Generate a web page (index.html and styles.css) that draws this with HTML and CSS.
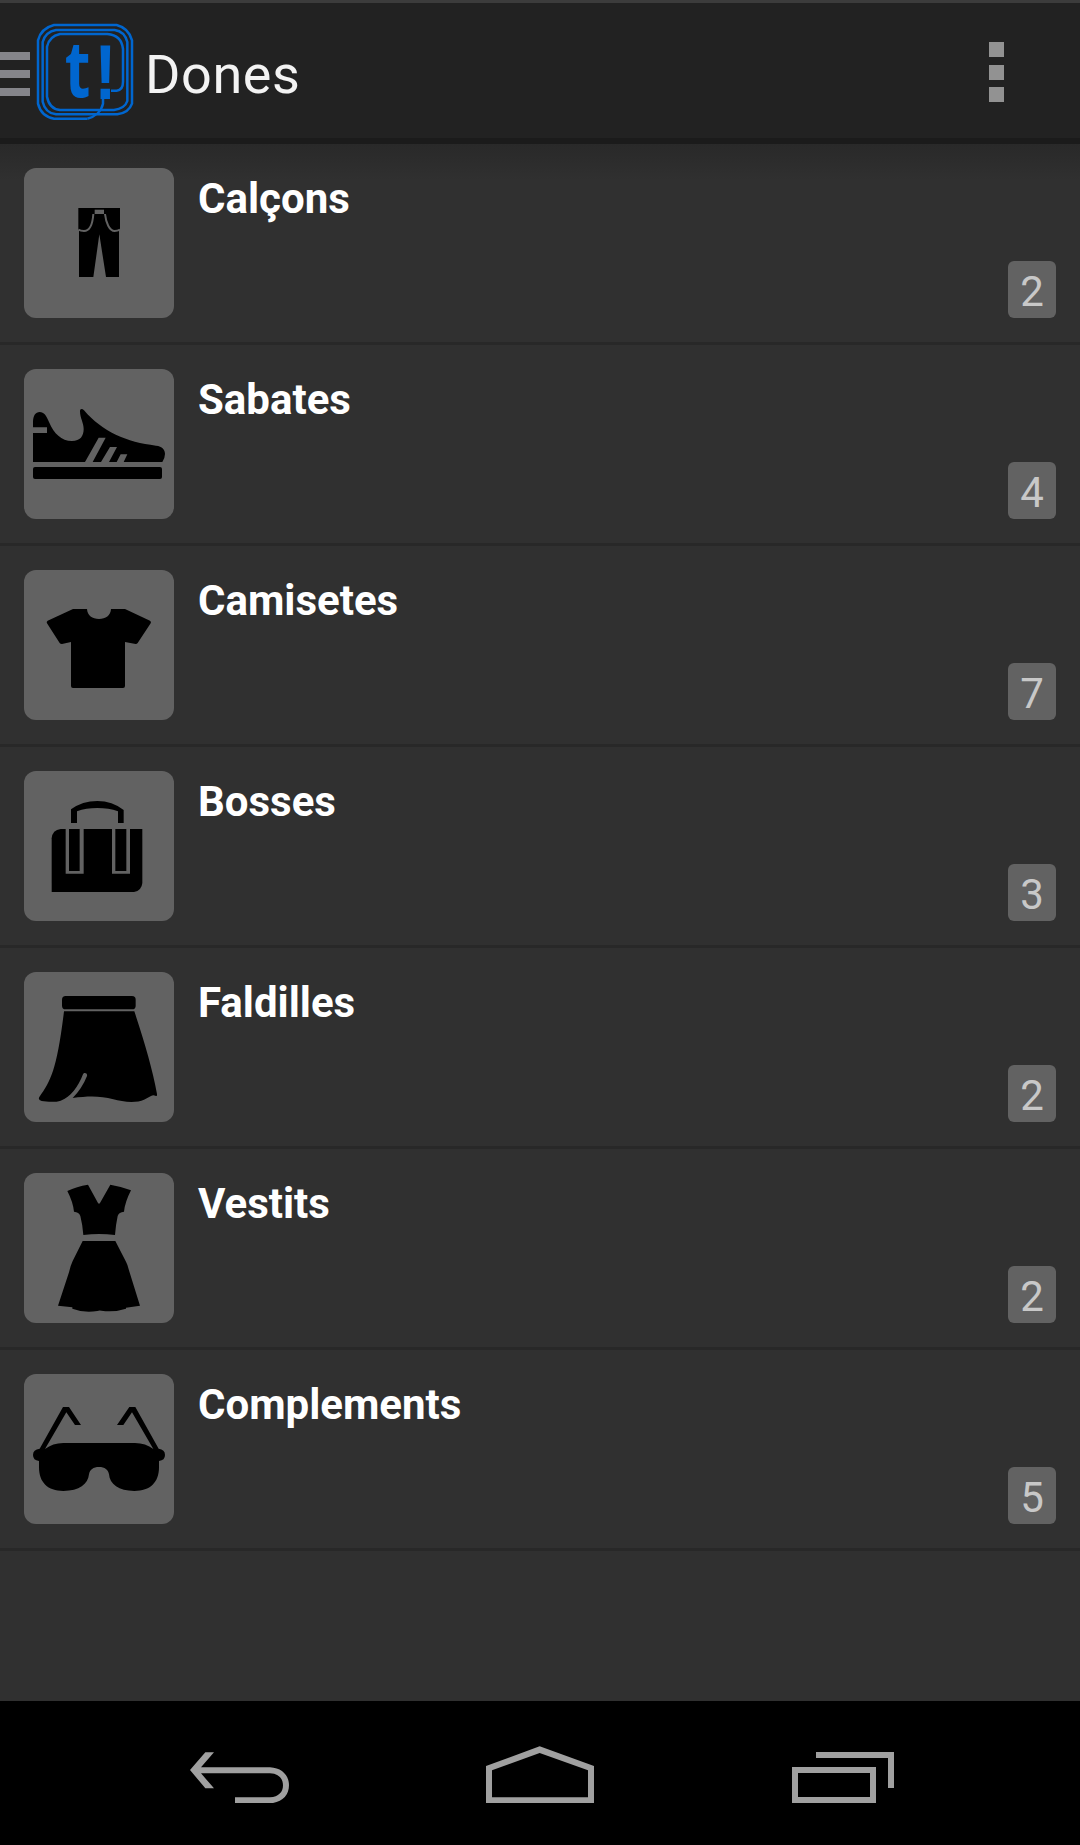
FILE: index.html
```html
<!DOCTYPE html>
<html lang="ca">
<head>
<meta charset="utf-8">
<title>Dones</title>
<link rel="stylesheet" href="styles.css">
</head>
<body>
<div class="screen">
  <header class="action-bar">
    <div class="drawer-toggle"><i></i><i></i><i></i></div>
    <svg class="logo" viewBox="111 72 288 288" aria-hidden="true">
      <g class="logo-lines">
        <path d="M262 356H162C134 351 120 335 114 311V121C120 98 134 82 162 75H350C377 82 390 98 396 121V311C390 328 377 340 352 343H168C145 340 133 327 128 305V126C133 108 145 94 168 90H344C366 93 377 107 382 126V303C377 319 362 327 342 330H180C155 327 145 312 141 290V140C145 120 158 107 180 102H322C350 104 366 120 369 147V245C369 262 362 271 350 272H333"/>
        <path d="M309 297V311C304 333 286 350 262 356"/>
      </g>
      <text class="logo-t" x="194" y="290" textLength="77" lengthAdjust="spacingAndGlyphs">t</text>
      <text class="logo-mark" x="283" y="297" textLength="67" lengthAdjust="spacingAndGlyphs">!</text>
    </svg>
    <h1 class="title">Dones</h1>
    <div class="overflow"><i></i><i></i><i></i></div>
  </header>

  <ul class="list">
    <li class="row">
      <div class="thumb"><svg viewBox="72 54 450 450">
        <path d="M235 174H360V240H357V381H318L298 253L280 381H237V240H235Z"/>
        <path class="cut" d="M284 179H312V192H284Z"/>
        <path class="seam" d="M280 192C278 220 270 243 252 243Q242 243 235 239M315 192C318 218 328 243 344 243Q352 243 360 239"/>
      </svg></div>
      <h2 class="name">Calçons</h2><span class="count">2</span>
    </li>
    <li class="row">
      <div class="thumb"><svg viewBox="72 57 450 450">
        <path d="M99 336V249H141V232H99V216C99 197 107 186 119 186C132 186 139 197 147 216C162 251 184 273 216 273C241 273 251 258 251 237C251 218 240 205 240 184C240 176 246 175 252 181C307 245 380 277 468 287C487 289 495 299 495 312Q495 323 487 336H371L382 313H362L350 336H327L351 291H330L303 336H278L317 263H296L255 336Z"/>
        <rect x="99" y="351" width="387" height="36" rx="6"/>
      </svg></div>
      <h2 class="name">Sabates</h2><span class="count">4</span>
    </li>
    <li class="row">
      <div class="thumb"><svg viewBox="72 60 450 450">
        <path d="M219 177H261C262 197 277 207 297 207C317 207 332 197 333 177H375L450 212Q455 215 452 220L413 279Q411 282 407 282L375 276V408Q375 414 369 414H219Q213 414 213 408V276L186 282Q181 282 179 279L141 220Q138 215 143 212Z"/>
      </svg></div>
      <h2 class="name">Camisetes</h2><span class="count">7</span>
    </li>
    <li class="row">
      <div class="thumb"><svg viewBox="72 63 450 450">
        <path d="M213 219V178Q247 153 292 153Q337 153 371 180V219H354V184Q326 174 292 174Q258 174 231 184V219Z"/>
        <path d="M182 237H427V399Q425 422 402 426H155V265Q157 240 182 237Z"/>
        <path class="cut" fill-rule="evenodd" d="M197 236H251V371H197ZM207 236V363H239V236ZM336 236H390V371H336ZM346 236V363H379V236Z"/>
      </svg></div>
      <h2 class="name">Bosses</h2><span class="count">3</span>
    </li>
    <li class="row">
      <div class="thumb"><svg viewBox="72 66 450 450">
        <rect x="186" y="138" width="221" height="40" rx="11"/>
        <path d="M192 184H403C433 276 457 355 471 432Q472 441 466 437Q460 434 453 438L432 449C410 460 367 456 340 448C300 437 265 438 218 444Q247 414 261 378C263 369 252 366 249 373C235 410 212 442 182 452C168 457 142 456 125 453Q113 450 118 441C153 393 171 356 192 184Z"/>
      </svg></div>
      <h2 class="name">Faldilles</h2><span class="count">2</span>
    </li>
    <li class="row">
      <div class="thumb"><svg viewBox="72 69 450 450">
        <path d="M202 123Q230 109 264 104L294 159Q297 164 300 159L331 104Q362 109 393 121Q375 156 372 185Q357 186 353 198Q347 226 345 255Q297 249 250 255Q248 225 241 198Q237 186 222 185Q219 156 202 123Z"/>
        <path d="M248 273H346L378 335Q383 344 386 358L420 467L378 473V476Q341 488 304 482Q298 480 292 483Q250 489 217 476V472L174 467L207 367Q211 348 218 333Z"/>
      </svg></div>
      <h2 class="name">Vestits</h2><span class="count">2</span>
    </li>
    <li class="row">
      <div class="thumb"><svg viewBox="72 72 450 450">
        <path d="M189 171H207L243 225H225L199 187L135 297Q158 279 190 279H405Q437 279 460 297L396 187L370 225H351L388 171H406L476 296Q495 298 495 315Q495 331 477 333V352C477 397 451 423 403 423C356 423 329 402 327 373C325 359 314 351 297 351C280 351 269 359 267 373C264 402 238 423 190 423C143 423 117 397 117 352V333Q99 331 99 315Q99 298 119 296Z"/>
      </svg></div>
      <h2 class="name">Complements</h2><span class="count">5</span>
    </li>
  </ul>

  <nav class="nav-bar">
    <svg class="nav-back" viewBox="60 215 297 154" aria-label="Enrere"><path d="M60 269L106 216H132L93 261H300C336 263 357 285 357 315C357 345 336 367 300 369H195V351H300C326 350 339 335 339 315C339 295 326 280 300 279H93L132 324H106Z"/></svg>
    <svg class="nav-home" viewBox="948 197 324 172" aria-label="Inici"><path fill-rule="evenodd" d="M948 257L1109 198L1272 257V369H948ZM966 270V351H1254V270L1109 218Z"/></svg>
    <svg class="nav-recent" viewBox="96 216 306 153" aria-label="Recents"><path fill-rule="evenodd" d="M168 216H402V324H384V234H168ZM96 261H348V369H96ZM114 279V351H330V279Z"/></svg>
  </nav>
</div>
</body>
</html>
```
FILE: styles.css
```css
* {
  box-sizing: border-box;
}

body {
  margin: 0;
  background: #303030;
  font-family: Roboto, "Liberation Sans", sans-serif;
}

.screen {
  width: 1080px;
  height: 1845px;
  display: flex;
  flex-direction: column;
  overflow: hidden;
}

.action-bar {
  height: 144px;
  flex: none;
  display: flex;
  align-items: center;
  background: #222;
  border-top: 3px solid #3c3c3c;
  border-bottom: 6px solid #1b1b1b;
}

.drawer-toggle {
  width: 30px;
  margin-top: 7px;
  display: flex;
  flex-direction: column;
  gap: 10px;
}

.drawer-toggle i {
  height: 8px;
  background: #85858a;
}

.logo {
  width: 96px;
  height: 96px;
  margin: 3px 0 0 7px;
  overflow: visible;
}

.logo-lines {
  fill: none;
  stroke: #0066cf;
  stroke-width: 7.5;
}

.logo text {
  fill: #0066cf;
  font-weight: 700;
}

.logo-t {
  font-family: "Open Sans", sans-serif;
  font-size: 234px;
}

.logo-mark {
  font-family: "Liberation Sans", sans-serif;
  font-size: 235px;
}

.title {
  margin: 8px 0 0 12px;
  color: #f3f3f3;
  font-size: 54px;
  font-weight: 400;
  letter-spacing: 0.6px;
  line-height: 64px;
}

.overflow {
  width: 15px;
  margin: 3px 76px 0 auto;
  display: flex;
  flex-direction: column;
  gap: 7.5px;
}

.overflow i {
  height: 15px;
  background: #929292;
}

.list {
  flex: 1;
  margin: 0;
  padding: 0;
  list-style: none;
  background: linear-gradient(#292929, #303030 36px);
}

.row {
  height: 201px;
  display: flex;
  padding: 24px;
  border-bottom: 3px solid #282828;
}

.thumb {
  width: 150px;
  height: 150px;
  border-radius: 12px;
  background: #626262;
}

.thumb svg {
  display: block;
  width: 150px;
  height: 150px;
}

.cut {
  fill: #626262;
}

.seam {
  fill: none;
  stroke: #626262;
  stroke-width: 6;
}

.name {
  flex: 1;
  margin: 6px 0 0 24px;
  color: #fff;
  font-size: 42px;
  font-weight: 700;
  line-height: 50px;
}

.count {
  align-self: flex-end;
  width: 48px;
  height: 57px;
  border-radius: 6px;
  background: #626262;
  color: #c8c8c8;
  font-size: 42px;
  line-height: 62px;
  text-align: center;
}

.nav-bar {
  height: 144px;
  flex: none;
  display: flex;
  align-items: flex-end;
  justify-content: space-between;
  padding: 0 186px 42px 190px;
  background: #000;
}

.nav-bar svg {
  fill: #a0a0a0;
}

.nav-back {
  width: 99px;
  height: 51.33px;
}

.nav-home {
  width: 108px;
  height: 57.33px;
  margin-left: -1px;
}

.nav-recent {
  width: 102px;
  height: 51px;
}
```
